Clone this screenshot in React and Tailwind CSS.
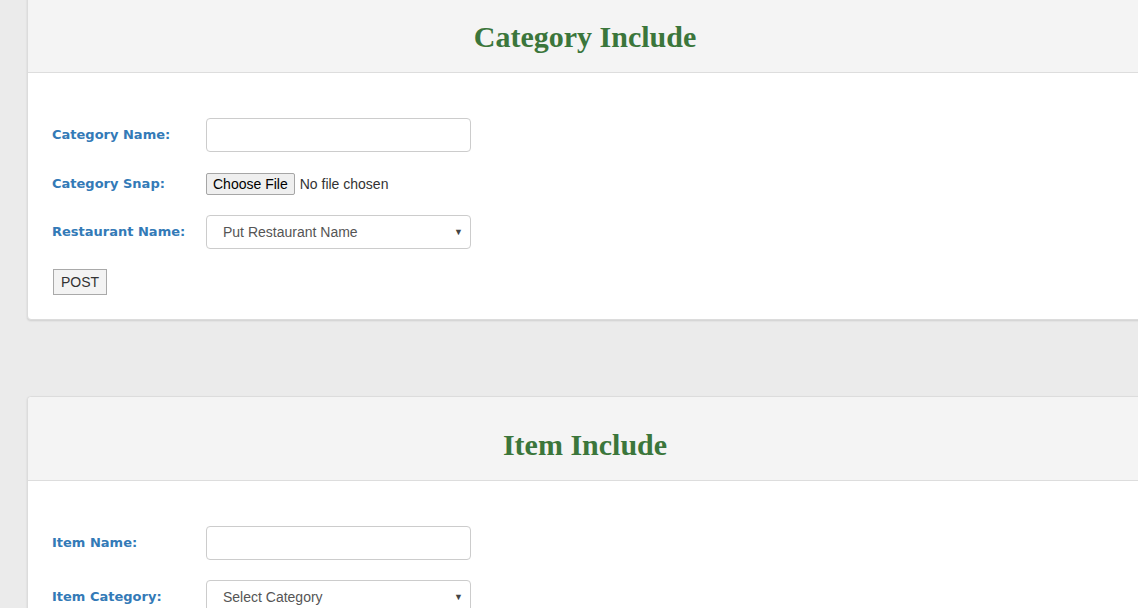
import React from 'react';

const labelFont = { fontFamily: '"DejaVu Sans", sans-serif' };

const Label = ({ children }) => (
    <label style={labelFont} className="w-[154px] shrink-0 text-[13px] font-bold text-[#337ab7]">
        {children}
    </label>
);

const TextInput = () => (
    <input
        type="text"
        className="w-[265px] h-[34px] rounded-[4px] border border-[#ccc] bg-white px-3 text-[14px] text-[#555] outline-none"
    />
);

const SelectBox = ({ placeholder }) => (
    <div className="relative w-[265px] h-[34px]">
        <select
            className="w-full h-full appearance-none rounded-[4px] border border-[#ccc] bg-white pl-4 pr-8 text-[14px] text-[#555] outline-none font-['Liberation_Sans',Arial,sans-serif]"
            defaultValue=""
        >
            <option value="">{placeholder}</option>
        </select>
        {/* dropdown arrow */}
        <span className="pointer-events-none absolute right-[8px] top-1/2 -translate-y-1/2 text-[9px] leading-none text-[#444]">▼</span>
    </div>
);

const Card = ({ title, children, className = '' }) => (
    <div className={`w-[1116px] rounded-[4px] border border-[#dcdcdc] bg-white shadow-[0_1px_2px_rgba(0,0,0,0.12)] ${className}`}>
        <div className="h-[84px] pt-[11px] flex items-center justify-center bg-[#f4f4f4] border-b border-[#dddddd] rounded-t-[4px]">
            <h2 className="text-[30px] font-bold text-[#3b763b] font-['Liberation_Serif','Times_New_Roman',serif]">
                {title}
            </h2>
        </div>
        {children}
    </div>
);

export default function App() {
    return (
        <div className="w-[1138px] h-[608px] overflow-hidden bg-[#ebebeb] font-['Liberation_Sans',Arial,sans-serif]">
            <div className="pl-[27px] -mt-[12px]">
                {/* Category form */}
                <Card title="Category Include">
                    <div className="pt-[45px] pb-[24px] px-[24px]">
                        <div className="flex items-center">
                            <Label>Category Name:</Label>
                            <TextInput />
                        </div>
                        <div className="flex items-center mt-[21px] h-[22px]">
                            <Label>Category Snap:</Label>
                            <div className="flex items-center">
                                <button className="h-[22px] px-[6px] border border-[#a6a6a6] rounded-[2px] bg-[#efefef] text-[14px] text-black leading-none">
                                    Choose File
                                </button>
                                <span className="ml-[5px] text-[14px] text-[#333]">No file chosen</span>
                            </div>
                        </div>
                        <div className="flex items-center mt-[20px]">
                            <Label>Restaurant Name:</Label>
                            <SelectBox placeholder="Put Restaurant Name" />
                        </div>
                        <button className="mt-[20px] ml-px h-[26px] w-[54px] border border-[#a9a9a9] bg-[#f3f3f3] text-[14px] text-[#333]">
                            POST
                        </button>
                    </div>
                </Card>

                {/* Item form */}
                <Card title="Item Include" className="mt-[76px]">
                    <div className="pt-[45px] pb-[24px] px-[24px]">
                        <div className="flex items-center">
                            <Label>Item Name:</Label>
                            <TextInput />
                        </div>
                        <div className="flex items-center mt-[20px]">
                            <Label>Item Category:</Label>
                            <SelectBox placeholder="Select Category" />
                        </div>
                    </div>
                </Card>
            </div>
        </div>
    );
}
